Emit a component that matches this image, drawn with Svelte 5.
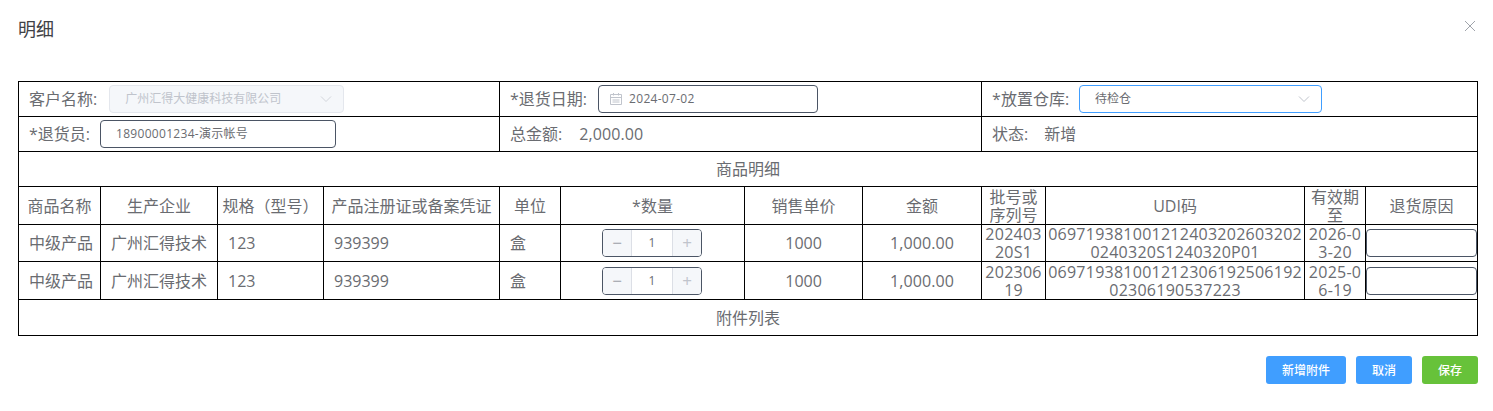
<script>
  const cols = [82, 117, 106, 176, 61, 184, 118, 119, 64, 259, 61, 112];
  const heads = ['商品名称', '生产企业', '规格（型号）', '产品注册证或备案凭证', '单位', '*数量', '销售单价', '金额', '批号或序列号', 'UDI码', '有效期至', '退货原因'];
  const rows = [
    { h: 'r37', batch: '20240320S1', udi: '0697193810012124032026032020240320S1240320P01', exp: '2026-03-20' },
    { h: 'r38', batch: '20230619', udi: '06971938100121230619250619202306190537223', exp: '2025-06-19' }
  ];
</script>

<div class="dialog">
  <header class="head">
    <span class="title">明细</span>
    <svg class="close" viewBox="0 0 12 12" width="12" height="12" aria-label="关闭"><path d="M1 1 11 11M11 1 1 11" stroke="#a0a4ab" stroke-width="1" fill="none"/></svg>
  </header>

  <table>
    <colgroup>
      {#each cols as w}<col style="width:{w}px" />{/each}
    </colgroup>
    <tbody>
      <tr class="r35">
        <td colspan="4" class="pad"><div class="line"><span class="lbl">客户名称:</span>
          <div class="ctl sel dis w235 m12"><span>广州汇得大健康科技有限公司</span>
            <svg class="chev" viewBox="0 0 12 8" width="12" height="8"><path d="M1 1.5 6 6.5 11 1.5" stroke="#d3d6dc" fill="none"/></svg></div></div></td>
        <td colspan="4" class="pad"><div class="line"><span class="lbl">*退货日期:</span>
          <div class="ctl date w220 m11">
            <svg class="cal" viewBox="0 0 12 12" width="12" height="12"><path d="M.5 1.500h11v10h-11zM.5 4.500h11M3.500 0v2.500M8.500 0v2.500M2.500 7h7M2.500 9h7" stroke="#c0c4cc" fill="none"/></svg>
            <span class="digits">2024-07-02</span></div></div></td>
        <td colspan="4" class="pad"><div class="line"><span class="lbl">*放置仓库:</span>
          <div class="ctl sel focus w243 m10"><span>待检仓</span>
            <svg class="chev" viewBox="0 0 12 8" width="12" height="8"><path d="M1 1.5 6 6.5 11 1.5" stroke="#c0c4cc" fill="none"/></svg></div></div></td>
      </tr>
      <tr class="r35">
        <td colspan="4" class="pad"><div class="line"><span class="lbl">*退货员:</span>
          <div class="ctl sel w236 m10"><span class="digits">18900001234-演示帐号</span></div></div></td>
        <td colspan="4" class="pad"><div class="line"><span class="lbl v17">总金额:</span><span class="amt">2,000.00</span></div></td>
        <td colspan="4" class="pad"><div class="line"><span class="lbl v16">状态:</span><span>新增</span></div></td>
      </tr>
      <tr class="r35"><td colspan="12" class="c">商品明细</td></tr>
      <tr class="r38">
        {#each heads as h}<td class="c">{h}</td>{/each}
      </tr>
      {#each rows as r}
        <tr class={r.h}>
          <td class="pad">中级产品</td>
          <td class="pad">广州汇得技术</td>
          <td class="pad">123</td>
          <td class="pad">939399</td>
          <td class="pad">盒</td>
          <td>
            <div class="num">
              <span class="step">−</span><span class="val">1</span><span class="step">+</span>
            </div>
          </td>
          <td class="c">1000</td>
          <td class="c amt">1,000.00</td>
          <td class="c brk">{r.batch}</td>
          <td class="c brk">{r.udi}</td>
          <td class="c brk">{r.exp}</td>
          <td><div class="ctl rs"></div></td>
        </tr>
      {/each}
      <tr class="r36"><td colspan="12" class="c">附件列表</td></tr>
    </tbody>
  </table>

  <footer class="foot">
    <button class="blue b80">新增附件</button>
    <button class="blue">取消</button>
    <button class="green">保存</button>
  </footer>
</div>

<style>
  :global(body) { margin: 0; background: #fff; }
  .dialog {
    width: 1493px;
    height: 411px;
    box-sizing: border-box;
    padding: 0 15px 0 18px;
    font-family: "Open Sans", "Noto Sans CJK SC", sans-serif;
    color: #6a6c71;
    font-size: 16px;
  }
  .head {
    height: 81px;
    display: flex;
    justify-content: space-between;
    align-items: flex-start;
  }
  .title { font-size: 18px; line-height: 24px; margin-top: 17px; color: #3f4145; }
  .close { margin: 20px 2px 0 0; }
  table {
    table-layout: fixed;
    border-collapse: collapse;
    width: 1460px;
  }
  td {
    border: 1px solid #000;
    padding: 0;
    line-height: 18px;
    overflow: hidden;
    word-break: break-all;
  }
  .r35 { height: 35px; }
  .r38 { height: 38px; }
  .r37 { height: 37px; }
  .r36 { height: 36px; }
  .c { text-align: center; }
  .pad { padding-left: 10px; }
  .brk { letter-spacing: 0.25px; }
  .digits { letter-spacing: 0.3px; }
  .amt { letter-spacing: 0.1px; }
  .line { display: flex; align-items: center; }
  .lbl { white-space: nowrap; }
  .v17 { margin-right: 17px; }
  .v16 { margin-right: 16px; }
  .ctl {
    box-sizing: border-box;
    height: 28px;
    border: 1px solid #4b5565;
    border-radius: 4px;
    display: flex;
    align-items: center;
    font-size: 12px;
    background: #fff;
  }
  .m10 { margin-left: 10px; }
  .m11 { margin-left: 11px; }
  .m12 { margin-left: 12px; }
  .sel { padding-left: 15px; justify-content: space-between; padding-right: 11px; }
  .date { padding-left: 11px; gap: 7px; }
  .w235 { width: 235px; }
  .w236 { width: 236px; }
  .w220 { width: 220px; }
  .w243 { width: 243px; }
  .dis { background: #f5f7fa; border-color: #e4e7ed; color: #c0c4cc; }
  .focus { border-color: #409eff; }
  .num {
    box-sizing: border-box;
    width: 100px;
    height: 28px;
    margin-left: 41px;
    border: 1px solid #4b5565;
    border-radius: 4px;
    display: flex;
    font-size: 12px;
    overflow: hidden;
  }
  .step {
    width: 28px;
    background: #f5f7fa;
    color: #9a9ea6;
    text-align: center;
    line-height: 26px;
    font-size: 17px;
  }
  .step:last-child { color: #c0c4cc; }
  .val {
    flex: 1;
    text-align: center;
    line-height: 26px;
    border-left: 1px solid #dcdfe6;
    border-right: 1px solid #dcdfe6;
  }
  .rs { width: 111px; margin: 0 auto; }
  .foot {
    display: flex;
    justify-content: flex-end;
    gap: 10px;
    margin-top: 20px;
  }
  button {
    width: 56px;
    height: 28px;
    border: 0;
    border-radius: 3px;
    color: #fff;
    font: 500 12px "Open Sans", "Noto Sans CJK SC", sans-serif;
    padding: 0;
  }
  .b80 { width: 80px; }
  .blue { background: #409eff; }
  .green { background: #67c23a; }
</style>
